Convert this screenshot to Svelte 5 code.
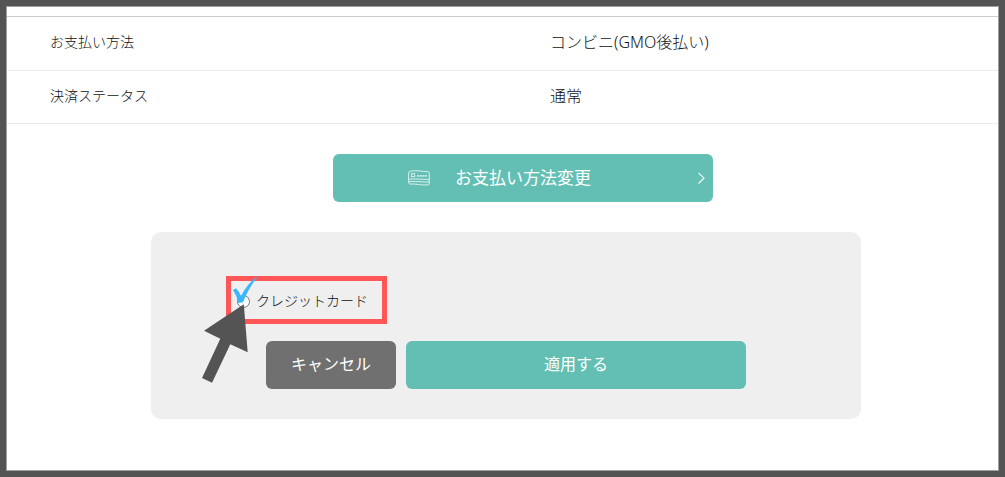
<script>
  const rows = [
    { label: 'お支払い方法', value: 'コンビニ(GMO後払い)' },
    { label: '決済ステータス', value: '通常' },
  ];
  let method = $state('');
</script>

<main>
  <dl>
    {#each rows as row}
      <div class="row">
        <dt>{row.label}</dt>
        <dd>{row.value}</dd>
      </div>
    {/each}
  </dl>

  <div class="content">
    <button class="change" type="button">
      <svg class="card" viewBox="0 0 22 16" aria-hidden="true">
        <g fill="none" stroke="#fff" stroke-width=".9" opacity=".85">
          <path d="M.6 3Q.7 1.4 2.6 1.1Q8 .3 13 1.1T20 1.7Q21.3 1.8 21.3 3.4V13.2Q21.3 14.8 19.8 14.9Q15 15.3 10.5 14.5T2.3 14.1Q.6 14 .6 12.5Z" />
          <rect x="3.5" y="3.7" width="3.2" height="3" />
          <path d="M9 5.8H19" stroke-width="1.8" stroke-dasharray="2.2 .5" opacity=".8" />
          <path d="M1 9.1Q8 8.8 13 9.2T21 9.3M1 11.6Q8 11.4 13 11.8T21 12" />
        </g>
      </svg>
      <span>お支払い方法変更</span>
      <svg class="chevron" viewBox="0 0 8 12" aria-hidden="true">
        <path d="M1.5 .8L7 6.2L1.5 11.5" fill="none" stroke="#fff" stroke-width="1.1" />
      </svg>
    </button>

    <form class="panel" onsubmit={(e) => e.preventDefault()}>
      <label class="option">
        <input type="radio" name="method" value="card" bind:group={method} />
        <span>クレジットカード</span>
        <svg class="marks" viewBox="0 0 60 112" aria-hidden="true">
          <path d="M33 20L36 18.3Q39 21.5 41 26Q48.5 12 58 6.3Q49 17 43 32.3L38.5 33Q37 26 33 20Z" fill="#38b6ff" />
          <path d="M43.8 34.3L47.7 82.3L30.3 74.3L12 112.7L2 108L20.3 68.7L4 60.7Z" fill="#545454" />
        </svg>
      </label>
      <div class="actions">
        <button class="cancel" type="button">キャンセル</button>
        <button class="apply" type="submit">適用する</button>
      </div>
    </form>
  </div>
</main>

<style>
  :global(body) {
    margin: 0;
    background: #545454;
  }
  main {
    box-sizing: border-box;
    min-height: 465px;
    margin: 6px;
    padding: 9px 0 51px;
    border: 1px solid #a0a0a0;
    background: #fff;
    color: #111;
    font-family: "Noto Sans", "Noto Sans CJK JP", sans-serif;
    font-weight: 300;
  }
  dl {
    margin: 0;
    border-top: 1px solid #ccc;
  }
  .row {
    display: grid;
    grid-template-columns: 500px 1fr;
    align-items: center;
    padding: 13px 43px 16px;
    border-bottom: 1px solid #ebebeb;
    line-height: 24px;
  }
  .row + .row {
    padding-bottom: 15px;
  }
  dt {
    font-size: 14px;
  }
  dd {
    margin: 0;
    font-size: 16px;
  }
  .content {
    display: flex;
    flex-direction: column;
    align-items: center;
    gap: 30px;
    padding: 30px 0 0 7px;
  }
  button {
    height: 48px;
    padding: 0 0 4px;
    border: 0;
    border-radius: 6px;
    background: #63bfb4;
    color: #fff;
    font: 400 16px/24px "Noto Sans CJK JP", sans-serif;
    cursor: pointer;
  }
  .change {
    display: flex;
    align-items: center;
    box-sizing: border-box;
    width: 380px;
    margin-left: 34px;
    padding: 0 8px 0 75px;
    font-size: 17px;
  }
  .change span {
    padding-bottom: 3px;
  }
  .card {
    width: 22px;
    height: 16px;
    margin-right: 25px;
  }
  .chevron {
    width: 8px;
    height: 12px;
    margin-left: auto;
  }
  .panel {
    display: flex;
    flex-direction: column;
    box-sizing: border-box;
    width: 100%;
    max-width: 710px;
    padding: 44px 75px 30px;
    border-radius: 10px;
    background: #efefef;
  }
  .option {
    position: relative;
    display: flex;
    align-items: center;
    align-self: flex-start;
    box-sizing: border-box;
    width: 161px;
    height: 48px;
    padding-left: 6px;
    border: 5px solid #ff5757;
    font-size: 14px;
  }
  input {
    flex: none;
    width: 13px;
    height: 13px;
    margin: 3px 6px 0 0;
  }
  .marks {
    position: absolute;
    top: -11px;
    left: -31px;
    width: 60px;
    height: 112px;
    overflow: visible;
    pointer-events: none;
  }
  .actions {
    display: flex;
    justify-content: center;
    gap: 10px;
    margin-top: 17px;
  }
  .cancel {
    width: 130px;
    background: #707070;
  }
  .apply {
    width: 340px;
  }
</style>
